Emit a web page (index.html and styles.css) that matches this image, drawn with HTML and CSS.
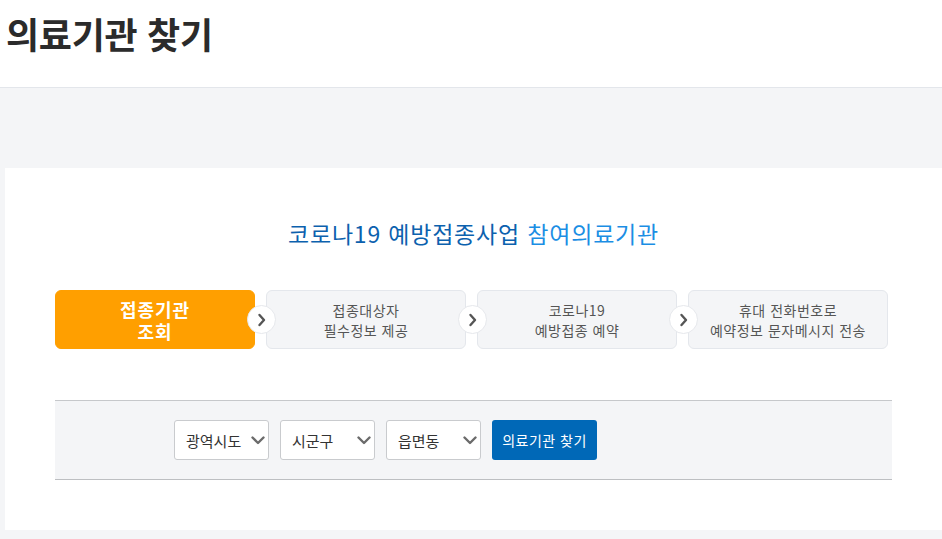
FILE: index.html
```html
<!DOCTYPE html>
<html lang="ko">
<head>
<meta charset="utf-8">
<title>의료기관 찾기</title>
<link rel="stylesheet" href="styles.css">
</head>
<body>
<header class="top">
  <h1 class="title">의료기관 찾기</h1>
</header>
<main class="page">
  <section class="card">
    <h2 class="heading"><span class="dark">코로나19 예방접종사업</span> <span class="light">참여의료기관</span></h2>
    <ol class="steps">
      <li class="step active"><span class="line">접종기관</span><span class="line">조회</span></li>
      <li class="step">
        <span class="arrow"><svg width="10" height="14" viewBox="0 0 10 14"><path d="M2.5 2 L7 7 L2.5 12" fill="none" stroke="#555" stroke-width="2.4" stroke-linecap="round" stroke-linejoin="round"/></svg></span>
        <span class="line">접종대상자</span><span class="line">필수정보 제공</span></li>
      <li class="step">
        <span class="arrow"><svg width="10" height="14" viewBox="0 0 10 14"><path d="M2.5 2 L7 7 L2.5 12" fill="none" stroke="#555" stroke-width="2.4" stroke-linecap="round" stroke-linejoin="round"/></svg></span>
        <span class="line">코로나19</span><span class="line">예방접종 예약</span></li>
      <li class="step">
        <span class="arrow"><svg width="10" height="14" viewBox="0 0 10 14"><path d="M2.5 2 L7 7 L2.5 12" fill="none" stroke="#555" stroke-width="2.4" stroke-linecap="round" stroke-linejoin="round"/></svg></span>
        <span class="line">휴대 전화번호로</span><span class="line">예약정보 문자메시지 전송</span></li>
    </ol>
    <div class="search">
      <div class="select"><span>광역시도</span><svg width="14" height="9" viewBox="0 0 14 9"><path d="M1.5 1.5 L7 7 L12.5 1.5" fill="none" stroke="#6b6b6b" stroke-width="2.4" stroke-linecap="round" stroke-linejoin="round"/></svg></div>
      <div class="select"><span>시군구</span><svg width="14" height="9" viewBox="0 0 14 9"><path d="M1.5 1.5 L7 7 L12.5 1.5" fill="none" stroke="#6b6b6b" stroke-width="2.4" stroke-linecap="round" stroke-linejoin="round"/></svg></div>
      <div class="select"><span>읍면동</span><svg width="14" height="9" viewBox="0 0 14 9"><path d="M1.5 1.5 L7 7 L12.5 1.5" fill="none" stroke="#6b6b6b" stroke-width="2.4" stroke-linecap="round" stroke-linejoin="round"/></svg></div>
      <button class="btn" type="button">의료기관 찾기</button>
    </div>
  </section>
</main>
</body>
</html>
```

FILE: styles.css
```css
* { box-sizing: border-box; }
html, body { margin: 0; padding: 0; }
body {
  font-family: "Noto Sans CJK KR", "Noto Sans", sans-serif;
  background: #f4f5f7;
  color: #333;
  min-height: 539px;
}
.top {
  background: #fff;
  height: 88px;
  border-bottom: 1px solid #e3e6eb;
  padding: 8px 0 0 6px;
}
.title {
  margin: 0;
  font-size: 36px;
  line-height: 50px;
  font-weight: 700;
  letter-spacing: -0.3px;
  color: #2b2b2b;
}
.page {
  padding: 80px 0 9px 5px;
}
.card {
  background: #fff;
  padding: 49px 50px 50px 50px;
}
.heading {
  margin: 0;
  text-align: center;
  font-size: 23px;
  font-weight: 400;
  line-height: 33px;
  letter-spacing: 0.8px;
}
.dark { color: #0c61ae; }
.light { color: #1b8ee4; }
.steps {
  list-style: none;
  margin: 40px 0 0;
  padding: 0;
  display: flex;
  gap: 11px;
}
.step {
  position: relative;
  width: 200px;
  height: 59px;
  border-radius: 6px;
  background: #f4f5f7;
  border: 1px solid #e4e7ec;
  display: flex;
  flex-direction: column;
  align-items: center;
  justify-content: center;
  text-align: center;
  font-size: 14px;
  line-height: 20px;
  letter-spacing: 0.5px;
  color: #555;
}
.line { display: block; }
.step.active {
  background: #ff9f00;
  border-color: #ff9f00;
  color: #fff;
  font-size: 18px;
  font-weight: 700;
  line-height: 22px;
  letter-spacing: 1px;
}
.arrow {
  position: absolute;
  left: -20px;
  top: 14px;
  width: 29px;
  height: 29px;
  border-radius: 50%;
  background: #fff;
  border: 1px solid #e6e8ec;
  display: flex;
  align-items: center;
  justify-content: center;
}
.search {
  margin-top: 51px;
  height: 80px;
  background: #f4f5f7;
  border-top: 1px solid #c6c8cb;
  border-bottom: 1px solid #bdbfc2;
  display: flex;
  align-items: center;
  gap: 11px;
  padding-left: 119px;
}
.select {
  width: 95px;
  height: 40px;
  background: #fff;
  border: 1px solid #c9cbce;
  border-radius: 3px;
  display: flex;
  align-items: center;
  justify-content: space-between;
  padding: 0 3px 0 11px;
  font-size: 15px;
  color: #333;
}
.btn {
  width: 105px;
  height: 40px;
  border: 0;
  border-radius: 3px;
  background: #0068b7;
  color: #fff;
  font-family: inherit;
  font-size: 14px;
  letter-spacing: 0.5px;
  padding: 0;
}
```
